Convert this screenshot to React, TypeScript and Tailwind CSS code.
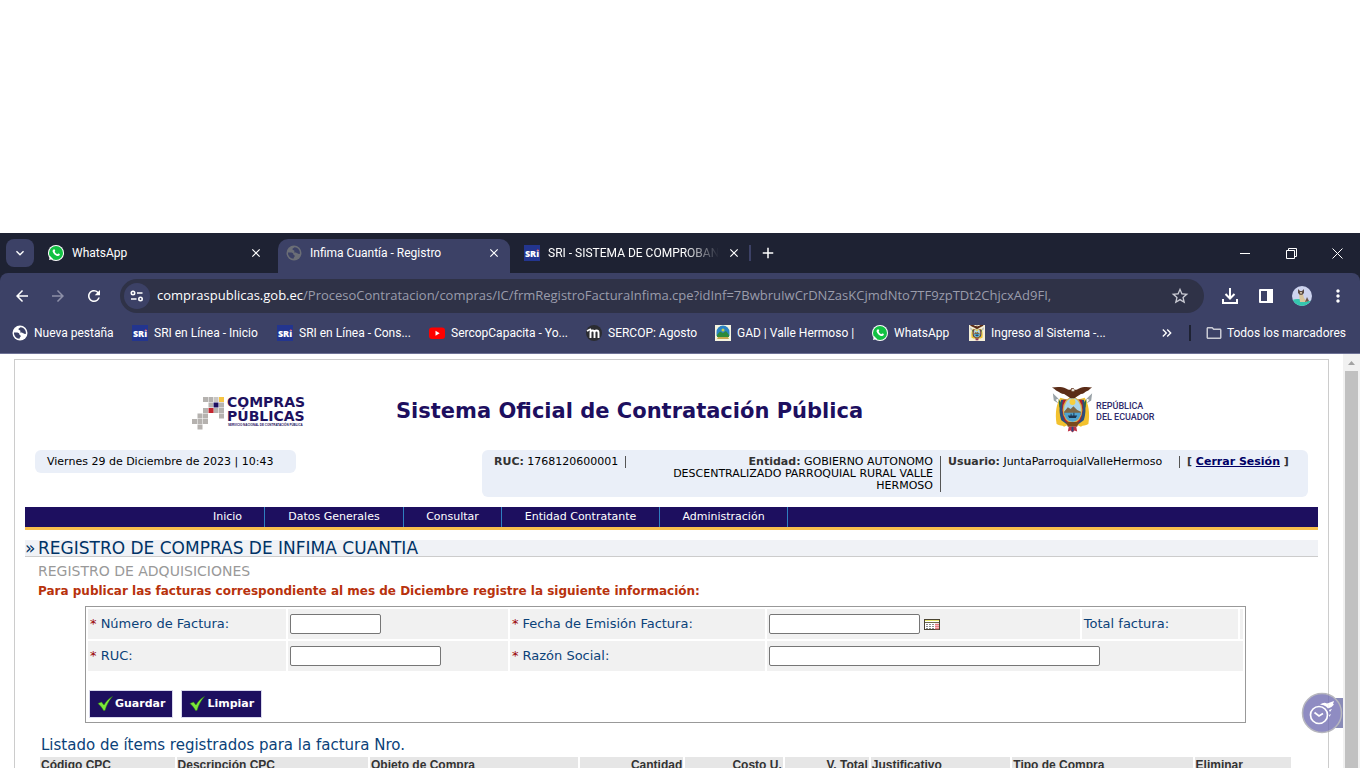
import React from 'react';
import {
  MdArrowBack,
  MdArrowForward,
  MdRefresh,
  MdStarBorder,
  MdMoreVert,
  MdClose,
  MdAdd,
  MdKeyboardArrowDown,
  MdOutlineFolder,
  MdKeyboardDoubleArrowRight,
} from 'react-icons/md';

const WhatsAppIcon = () => (
  <span className="flex size-4 shrink-0 items-center justify-center rounded-full bg-white">
    <span className="flex size-3.5 items-center justify-center rounded-full bg-[#12c143]">
      <svg viewBox="0 0 14 14" className="size-3.5">
        <path d="M0 14l1-4 3 3z" fill="#fff" />
        <path
          d="M4.500 3.500c.8-.5 1.200-.2 1.500.6.400 1-.1 1.200-.3 1.600.5 1.200 1.400 2 2.600 2.500.5-.3.700-1 1.500-.7 1 .4 1.300.8.9 1.600-.6 1-1.700 1.200-2.800.8C5.800 9.200 4.400 7.600 3.700 5.800c-.3-.9 0-1.800.8-2.300z"
          fill="#fff"
        />
      </svg>
    </span>
  </span>
);

const GlobeIcon = ({ className }: { className: string }) => (
  <svg viewBox="0 0 16 16" className={`size-4 shrink-0 ${className}`}>
    <circle cx="8" cy="8" r="7.500" fill="currentColor" />
    <path
      d="M2 7.500c1.500 0 3.500-.2 4.600.4 1.200.7.300 1.800 1.600 2.300 1 .4.600 1.300 0 1.900-.6.500-.3 1.200-.8 1.700C4 13.500 1.800 10.800 2 7.500z"
      className="fill-[#3c4166]"
    />
    <path
      d="M8.500 2.300c2.300.1 4.300 1.600 5.100 3.700.3 1 .4 2 .2 3-.9.300-1.700-.2-2.500-.8-.8-.6-2.200 0-2.800-.8-.5-.7.300-1.300-.3-1.900-.6-.5-1.700-.3-1.700-1.300 0-.9 1.200-.9 2-1.900z"
      className="fill-[#3c4166]"
    />
  </svg>
);

const SriIcon = () => (
  <svg viewBox="0 0 16 16" className="size-4 shrink-0">
    <rect width="16" height="16" fill="#23358f" />
    <text x="8" y="11.500" textAnchor="middle" fontSize="9" fontWeight="800" fontFamily="Open Sans, sans-serif" fill="#fff">
      SRi
    </text>
    <circle cx="13.800" cy="5" r="0.800" fill="#e03a4a" />
  </svg>
);

const YoutubeIcon = () => (
  <svg viewBox="0 0 16 16" className="size-4 shrink-0">
    <rect y="2.500" width="16" height="11.500" rx="3" fill="#f00" />
    <path d="M6.500 5.700v5l4.200-2.500z" fill="#fff" />
  </svg>
);

const MoodleIcon = () => (
  <svg viewBox="0 0 16 16" className="size-4 shrink-0">
    <circle cx="8" cy="8" r="8" fill="#2b2c31" />
    <path
      d="M1 6l4-2M4.500 13V7.500Q4.500 5.500 6.500 5.500t2 2V13M8.500 7.500q0-2 2-2t2 2V13"
      fill="none"
      stroke="#fff"
      strokeWidth="1.900"
    />
  </svg>
);

const LandscapeIcon = () => (
  <svg viewBox="0 0 16 16" className="size-4 shrink-0">
    <rect width="16" height="16" fill="#f6f4df" />
    <path d="M1.500 11V7a6.500 6.500 0 0 1 13 0v4z" fill="#2b83c4" />
    <path d="M2 10l3-3.500L8 8l3-2 3 4v2H2z" fill="#2f8a3a" />
    <circle cx="8" cy="5" r="1.500" fill="#c9cf4a" />
    <path d="M3 12h10l1 2H2z" fill="#c9a94f" />
  </svg>
);

const Shield = () => (
  <g>
    {/* flags */}
    <path d="M10 12C6 18 4 28 6 40c3 2 6 1 8 3l4-2V14z" fill="#f2c12e" />
    <path d="M36 12c4 6 6 16 4 28-3 2-6 1-8 3l-4-2V14z" fill="#f2c12e" />
    <path d="M11 14c-3 7-2 16 0 22l7 5V14z" fill="#2c4f7c" />
    <path d="M35 14c3 7 2 16 0 22l-7 5V14z" fill="#2c4f7c" />
    <path d="M13 14c-2 8-1 16 2 23l5 3V14zM33 14c2 8 1 16-2 23l-5 3V14z" fill="#b3202c" />
    <path d="M2 7l6 6-3 1 3 4-5-3zM44 7l-6 6 3 1-3 4 5-3z" fill="#9aa3a8" />
    <path d="M8 13l3 5-2 5zM38 13l-3 5 2 5z" fill="#2f6b3e" />
    {/* oval */}
    <ellipse cx="23" cy="25" rx="10.500" ry="14" fill="#d9b44a" />
    <ellipse cx="23" cy="25" rx="9" ry="12.500" fill="#a9d5ea" />
    <circle cx="23" cy="16.500" r="3.200" fill="#f6cf3d" />
    <path d="M14 27l4-5 3 2 3-3 4 4 4 2v3H14z" fill="#7d6847" />
    <path d="M14 28h18q-1 9-9 9.500Q15 37 14 28z" fill="#4fa3cf" />
    <path d="M18 31h10l-1.500 2.500h-7zM21 29h1v2h-1zM24 28h1v3h-1z" fill="#1c3550" />
    {/* condor */}
    <path
      d="M1 1c5-1 11-1 15 1 2 1 4 2 5 1 1-2 3-2 4 0 1 1 3 0 5-1 4-2 9-2 14-1-2 1-3 3-6 4-2 1-3 3-6 3l-5 3c-1 2-7 2-8 0l-5-3c-3 0-5-2-7-3S3 2 1 1z"
      fill="#5b2d18"
    />
    <path d="M22 3l1-1 2 1v2h-3z" fill="#e8e1d5" />
    {/* fasces */}
    <path d="M16 38h14l-2 5H18z" fill="#7b4a1e" />
    <path d="M19 43h8l1 5-3-1-2 2-2-2-3 1z" fill="#c03145" />
    <path d="M22 43h2v5h-2z" fill="#284c86" />
  </g>
);

const EcuadorIcon = () => (
  <svg viewBox="-2 0 50 50" className="size-4 shrink-0 bg-[#f4efd8]">
    <Shield />
  </svg>
);

const AvatarIcon = () => (
  <svg viewBox="0 0 20 20" className="size-5">
    <clipPath id="avatar">
      <circle cx="10" cy="10" r="10" />
    </clipPath>
    <g clipPath="url(#avatar)">
      <rect width="20" height="20" fill="#cdd3ee" />
      <path d="M0 14q6-2 12 0t8 0v6H0z" fill="#35c6ae" />
      <path d="M7 8h4l1 4 3 3v1H8z" fill="#d9c59c" />
      <path d="M6 3l2 2h2l2-2v4l-2 2H8L6 7z" fill="#5a4a44" />
      <path d="M8 6h2l-1 3z" fill="#e5d6b4" />
      <path d="M15 11l2 4-4 1z" fill="#6b5a4d" />
    </g>
  </svg>
);

const CheckIcon = () => (
  <svg viewBox="0 0 16 16" className="size-4">
    <path d="M1 7.500L4.500 6 7 9C9 5.500 11.500 2.500 15.500.500 12 4.500 9.500 9 8 14.500H6.500C5.500 12 3 9.500 1 7.500z" fill="#7be83a" stroke="#2f7d0e" strokeWidth="0.500" />
  </svg>
);

const CalendarIcon = () => (
  <svg viewBox="0 0 16 11" className="h-[11px] w-4">
    <rect x="0.500" y="0.500" width="15" height="10" fill="#fff" stroke="#4a4433" />
    <path d="M1 1.500h14" stroke="#e8e86a" />
    <path d="M1 3.500h14" stroke="#6b6a4d" />
    <path d="M2 5.500h9M2 7.500h9M2 9.500h9" stroke="#8c8c8c" strokeDasharray="2 1" />
    <path d="M11 5.500h4M11 7.500h4M11 9.500h4" stroke="#e77b80" strokeWidth="1.600" />
  </svg>
);

const ComprasLogo = () => (
  <svg viewBox="0 0 116 36" className="h-9 w-[116px] shrink-0" role="img" aria-label="Compras Públicas">
    <path
      d="M12 2h5v5h-5zM17.500 2h4.500v5h-4.500zM17.500 7.500h4.500v5h-4.500zM28 7.500h5v5h-5zM12 13h5v5h-5zM22.500 13h5v5h-5zM28 13h5v5h-5zM6.500 18.500h5v5h-5zM12 18.500h5v5h-5zM28 18.500h5v5h-5zM1 24h5v5H1zM6.500 24h5v5h-5zM12 24h5v5h-5zM6.500 29.500h5v5h-5z"
      fill="#b5b2af"
    />
    <path d="M28 2h5v5h-5z" fill="#f6c443" />
    <path d="M22.500 2h5v5h-5z" fill="#c9c6c2" />
    <path d="M22.500 7.500h5v5h-5z" fill="#1d1160" />
    <path d="M17.500 13h5v5h-5z" fill="#c4252f" />
    <g fill="#1d1160" fontWeight="bold">
      <g fontFamily="DejaVu Sans, sans-serif" fontSize="14">
        <text x="36" y="12">COMPRAS</text>
        <text x="36" y="25.500">PÚBLICAS</text>
      </g>
      <text x="37" y="31" fontSize="3" fontFamily="Liberation Sans, sans-serif">
        SERVICIO NACIONAL DE CONTRATACIÓN PÚBLICA
      </text>
    </g>
  </svg>
);

const EcuadorLogo = () => (
  <div className="flex items-center gap-0.5">
    <svg viewBox="0 0 46 49" className="h-[49px] w-[43px]">
      <Shield />
    </svg>
    <p className="w-[56px] pt-1.5 font-['Roboto',sans-serif] text-[9px] leading-[11px] font-medium whitespace-nowrap text-[#2f2a6b]">
      REPÚBLICA
      <br />
      DEL ECUADOR
    </p>
  </div>
);

const bookmarks = [
  { label: 'Nueva pestaña', icon: <GlobeIcon className="text-white" />, width: 'w-[120px]' },
  { label: 'SRI en Línea - Inicio', icon: <SriIcon />, width: 'w-[145px]' },
  { label: 'SRI en Línea - Cons...', icon: <SriIcon />, width: 'w-[152px]' },
  { label: 'SercopCapacita - Yo...', icon: <YoutubeIcon />, width: 'w-[157px]' },
  { label: 'SERCOP: Agosto', icon: <MoodleIcon />, width: 'w-[129px]' },
  { label: 'GAD | Valle Hermoso |', icon: <LandscapeIcon />, width: 'w-[157px]' },
  { label: 'WhatsApp', icon: <WhatsAppIcon />, width: 'w-[97px]' },
  { label: 'Ingreso al Sistema -...', icon: <EcuadorIcon />, width: 'w-[140px]' },
];

const menu = [
  { label: 'Inicio', width: 'w-[74px]' },
  { label: 'Datos Generales', width: 'w-[139px]' },
  { label: 'Consultar', width: 'w-[98px]' },
  { label: 'Entidad Contratante', width: 'w-[158px]' },
  { label: 'Administración', width: 'w-[128px]' },
];

const columns = [
  { label: 'Código CPC', className: 'w-[10.9%] text-left' },
  { label: 'Descripción CPC', className: 'w-[15.5%] text-left' },
  { label: 'Objeto de Compra', className: 'w-[16.8%] text-left' },
  { label: 'Cantidad', className: 'w-[8.4%] text-right' },
  { label: 'Costo U.', className: 'w-[7.9%] text-right' },
  { label: 'V. Total', className: 'w-[6.8%] text-right' },
  { label: 'Justificativo', className: 'w-[11.3%] text-left' },
  { label: 'Tipo de Compra', className: 'w-[14.6%] text-left' },
  { label: 'Eliminar', className: 'text-left' },
];

const TabStrip = () => (
  <div className="flex h-10 shrink-0 items-center bg-[#1e2233] text-xs text-white">
    <button aria-label="Buscar pestañas" className="ml-1.5 flex size-7 items-center justify-center rounded-lg bg-[#3c4166]">
      <MdKeyboardArrowDown className="size-4" />
    </button>
    <div className="ml-3.5 flex w-[230px] items-center gap-2">
      <WhatsAppIcon />
      <span className="grow">WhatsApp</span>
      <button aria-label="Cerrar" className="mr-[15px]">
        <MdClose className="size-3.5" />
      </button>
    </div>
    <div className="flex h-[34px] w-[232px] items-center gap-2 self-end rounded-t-[10px] bg-[#3c4166] px-2 pb-1.5">
      <GlobeIcon className="text-[#6b6e76]" />
      <span className="grow">Infima Cuantía - Registro</span>
      <button aria-label="Cerrar" className="mr-px">
        <MdClose className="size-3.5" />
      </button>
    </div>
    <div className="flex w-[241px] items-center gap-2 border-r-2 border-[#3c4166] pr-2.5 pl-3.5">
      <SriIcon />
      <span className="grow mask-r-from-80% whitespace-nowrap">SRI - SISTEMA DE COMPROBAN</span>
      <button aria-label="Cerrar">
        <MdClose className="size-3.5" />
      </button>
    </div>
    <button aria-label="Nueva pestaña" className="ml-2">
      <MdAdd className="size-[18px]" />
    </button>
    <div className="ml-auto flex">
      <button aria-label="Minimizar" className="flex w-[46px] justify-center">
        <svg viewBox="0 0 11 11" className="size-[11px]" fill="none" stroke="currentColor">
          <path d="M0 5.500h10" />
        </svg>
      </button>
      <button aria-label="Restaurar" className="flex w-[46px] justify-center">
        <svg viewBox="0 0 11 11" className="size-[11px]" fill="none" stroke="currentColor">
          <path d="M.5 2.500h8v8h-8zM2.500 2.500v-2h8v8h-2" />
        </svg>
      </button>
      <button aria-label="Cerrar ventana" className="flex w-[46px] justify-center">
        <svg viewBox="0 0 11 11" className="size-[11px]" fill="none" stroke="currentColor">
          <path d="M.5.500l10 10M10.500.500l-10 10" />
        </svg>
      </button>
    </div>
  </div>
);

const Toolbar = () => (
  <div className="shrink-0 bg-[#1e2233]">
    <div className="flex h-20 flex-col rounded-t-lg bg-[#3c4166] text-white">
      <div className="flex h-[46px] items-center">
        <div className="flex w-[120px] gap-[18px] pl-[13px]">
          <button aria-label="Atrás"><MdArrowBack className="size-[18px]" /></button>
          <button aria-label="Adelante" className="text-[#8d90a8]"><MdArrowForward className="size-[18px]" /></button>
          <button aria-label="Recargar"><MdRefresh className="size-[18px]" /></button>
        </div>
        <div className="flex h-[34px] min-w-0 grow items-center rounded-full bg-[#2f3247] px-1">
          <span className="flex size-[26px] shrink-0 items-center justify-center rounded-full bg-[#3c4166]">
            <svg viewBox="0 0 14 12" className="h-3 w-3.5" fill="none" stroke="currentColor" strokeWidth="1.600">
              <circle cx="3" cy="3" r="1.700" />
              <path d="M7 3h5.500M1 9h5.500" />
              <circle cx="10.500" cy="9" r="1.700" />
            </svg>
          </span>
          <span className="ml-[7px] grow truncate font-['Open_Sans',sans-serif] text-[13px] text-[#9a9cab]">
            <span className="text-white">compraspublicas.gob.ec</span>
            /ProcesoContratacion/compras/IC/frmRegistroFacturaInfima.cpe?idInf=7BwbruIwCrDNZasKCjmdNto7TF9zpTDt2ChjcxAd9FI,
          </span>
          <button aria-label="Agregar a marcadores" className="mr-2.5 text-[#c9cad3]"><MdStarBorder className="size-5" /></button>
        </div>
        <div className="flex w-[156px] items-center gap-4 pl-4">
          <button aria-label="Descargas">
            <svg viewBox="0 0 20 20" className="size-5" fill="none" stroke="currentColor" strokeWidth="2">
              <path d="M10 2v10M5.500 8l4.500 4.500L14.500 8M3 13v4h14v-4" />
            </svg>
          </button>
          <button aria-label="Panel lateral">
            <svg viewBox="0 0 20 20" className="size-5">
              <path d="M4 4h12v12H4z" fill="none" stroke="currentColor" strokeWidth="2" strokeLinejoin="round" />
              <path d="M11 3h6v14h-6z" fill="currentColor" />
            </svg>
          </button>
          <button aria-label="Perfil"><AvatarIcon /></button>
          <button aria-label="Menú"><MdMoreVert className="size-5" /></button>
        </div>
      </div>
      <div className="flex h-7 items-center pl-3 text-xs">
        {bookmarks.map((b, i) => (
          <a key={i} href="#" className={`flex shrink-0 items-center gap-1.5 whitespace-nowrap ${b.width}`}>
            {b.icon}
            {b.label}
          </a>
        ))}
        <div className="ml-auto flex items-center pr-3.5">
          <button aria-label="Más marcadores"><MdKeyboardDoubleArrowRight className="size-4" /></button>
          <span className="mx-3.5 h-4 w-0.5 bg-[#1e2233]" />
          <a href="#" className="flex items-center gap-1 whitespace-nowrap">
            <MdOutlineFolder className="size-[18px] text-[#c9cad3]" />
            Todos los marcadores
          </a>
        </div>
      </div>
    </div>
  </div>
);

const SessionInfo = () => (
  <div className="flex items-start justify-between px-2.5 text-[11px] leading-3 text-black">
    <p className="w-[261px] rounded-md bg-[#eaeff8] px-3 py-[5px] leading-[13px] whitespace-nowrap">Viernes 29 de Diciembre de 2023 | 10:43</p>
    <div className="flex h-[47px] items-start rounded-md bg-[#eaeff8] pt-1.5 pl-3">
      <p className="w-[132px] border-r border-[#555]">
        <b className="text-[#333]">RUC:</b> 1768120600001
      </p>
      <p className="w-[315px] border-r border-[#555] pr-[7px] pl-5 text-right">
        <b className="text-[#333]">Entidad:</b> GOBIERNO AUTONOMO DESCENTRALIZADO PARROQUIAL RURAL VALLE HERMOSO
      </p>
      <p className="w-[239px] border-r border-[#555] pl-[7px] whitespace-nowrap">
        <b className="text-[#333]">Usuario:</b> JuntaParroquialValleHermoso
      </p>
      <p className="w-[128px] pl-[7px] font-bold whitespace-nowrap text-[#333]">
        [ <a href="#" className="text-[#000066] underline">Cerrar Sesión</a> ]
      </p>
    </div>
  </div>
);

const RequiredLabel = ({ htmlFor, children }: { htmlFor: string; children: React.ReactNode }) => (
  <label htmlFor={htmlFor}>
    <span className="text-[#990000]">*</span> {children}
  </label>
);

const inputClass = 'block h-5 rounded-xs border border-[#767676] bg-white px-1 text-[13px] text-black';
const buttonClass = 'flex h-7 items-center gap-0.5 border border-[#d9d9ec] bg-[#1d0f5f] px-[7px] text-[11px] font-bold text-white';

const InvoiceForm = () => (
  <form className="mt-[5px] mr-[72px] ml-[60px] border border-[#999]">
    <table className="w-full table-fixed border-separate border-spacing-[2px] text-[13px] text-[#0b4279]">
      <colgroup>
        <col className="w-[17.3%]" />
        <col className="w-[19.2%]" />
        <col className="w-[22.3%]" />
        <col className="w-[27.3%]" />
        <col />
        <col className="w-[3px]" />
      </colgroup>
      <tbody>
        <tr className="h-[30px] [&>td]:bg-[#f1f1f1] [&>td]:px-0.5">
          <td><RequiredLabel htmlFor="numero">Número de Factura:</RequiredLabel></td>
          <td><input id="numero" type="text" className={`${inputClass} w-[91px]`} /></td>
          <td><RequiredLabel htmlFor="fecha">Fecha de Emisión Factura:</RequiredLabel></td>
          <td>
            <div className="flex items-center gap-1">
              <input id="fecha" type="text" className={`${inputClass} w-[151px]`} />
              <button type="button" aria-label="Calendario"><CalendarIcon /></button>
            </div>
          </td>
          <td>Total factura:</td>
          <td />
        </tr>
        <tr className="h-[30px] [&>td]:bg-[#f1f1f1] [&>td]:px-0.5">
          <td><RequiredLabel htmlFor="ruc">RUC:</RequiredLabel></td>
          <td><input id="ruc" type="text" className={`${inputClass} w-[151px]`} /></td>
          <td><RequiredLabel htmlFor="razon">Razón Social:</RequiredLabel></td>
          <td colSpan={3}><input id="razon" type="text" className={`${inputClass} w-[331px]`} /></td>
        </tr>
      </tbody>
    </table>
    <div className="mt-[17px] flex gap-2 px-[3px] pb-1">
      <button type="button" className={buttonClass}><CheckIcon />Guardar</button>
      <button type="button" className={buttonClass}><CheckIcon />Limpiar</button>
    </div>
  </form>
);

const FloatingClock = () => (
  <button aria-label="Accesos rápidos" className="absolute right-0 bottom-[34px] opacity-80">
    <svg viewBox="0 0 42 42" className="size-[42px]">
      <path d="M22 6h20v30H22z" fill="#6c6fa6" />
      <circle cx="21" cy="21" r="19.500" fill="#7470b4" stroke="#a5a5ae" strokeWidth="1.500" />
      <g fill="none" stroke="#fff" strokeWidth="1.700">
        <circle cx="18" cy="23" r="8.500" />
        <path d="M13.500 20.500l4.500 3.500 4-2.500" />
      </g>
      <path d="M19 12.500q4-3 7-1l7-2.500-1 3 1 .5q-2 3-6 4l-2-2q-2-1.500-6-2zM28 18l3-1-2 3zM28 23l2-1-1.500 3z" fill="#fff" />
    </svg>
  </button>
);

export default function App() {
  return (
    <div className="flex h-screen flex-col overflow-hidden bg-white pt-[233px] font-['Roboto',sans-serif]">
      <TabStrip />
      <Toolbar />
      <div className="relative flex min-h-0 grow border-t border-[#6e7296] font-['DejaVu_Sans',Verdana,sans-serif]">
        <main className="relative min-w-0 grow overflow-hidden px-3.5 pt-[5px]">
          <div className="border border-[#ccc] px-2.5 pb-10">
            <header className="flex h-[90px] items-center px-[166px]">
              <div className="pt-4">
                <ComprasLogo />
              </div>
              <h1 className="ml-[89px] pt-3.5 text-[21px] font-bold whitespace-nowrap text-[#1d0f5f]">Sistema Oficial de Contratación Pública</h1>
              <div className="ml-auto pt-2">
                <EcuadorLogo />
              </div>
            </header>
            <SessionInfo />
            <nav className="mt-2.5 flex h-[23px] border-b-[3px] border-[#f9c04d] bg-[#1d0f5f] pl-[166px] text-[11px] text-white">
              {menu.map((m) => (
                <a key={m.label} href="#" className={`flex items-center justify-center border-r border-[#2f7fc0] pt-px whitespace-nowrap ${m.width}`}>
                  {m.label}
                </a>
              ))}
            </nav>
            <h2 className="mt-2.5 flex border-b border-[#ccc] bg-[#f0f2f6] text-[17px] leading-4 text-[#003366]">
              <span className="w-[13px]">»</span>
              REGISTRO DE COMPRAS DE INFIMA CUANTIA
            </h2>
            <h3 className="mt-1 pl-[13px] text-sm leading-5 text-[#999]">REGISTRO DE ADQUISICIONES</h3>
            <p className="pl-[13px] text-xs leading-5 font-bold text-[#b8320c]">
              Para publicar las facturas correspondiente al mes de Diciembre registre la siguiente información:
            </p>
            <InvoiceForm />
            <h3 className="mt-3 pl-4 text-[15px] leading-5 text-[#0b4279]">Listado de ítems registrados para la factura Nro.</h3>
            <div className="pr-[25px] pl-[13px]">
              <table className="w-full table-fixed border-separate border-spacing-[2px] font-['Liberation_Sans',Arial,sans-serif] text-xs leading-4 text-[#333]">
                <thead>
                  <tr>
                    {columns.map((c) => (
                      <th key={c.label} className={`bg-[#e6e6e6] px-px pb-px whitespace-nowrap ${c.className}`}>{c.label}</th>
                    ))}
                  </tr>
                </thead>
              </table>
            </div>
          </div>
          <FloatingClock />
        </main>
        <div className="w-[17px] shrink-0 bg-[#f1f1f1]">
          <svg viewBox="0 0 17 17" className="size-[17px]">
            <path d="M5 11h7L8.500 7z" fill="#a3a3a3" />
          </svg>
          <div className="mx-0.5 h-full bg-[#c1c1c1]" />
        </div>
      </div>
    </div>
  );
}
